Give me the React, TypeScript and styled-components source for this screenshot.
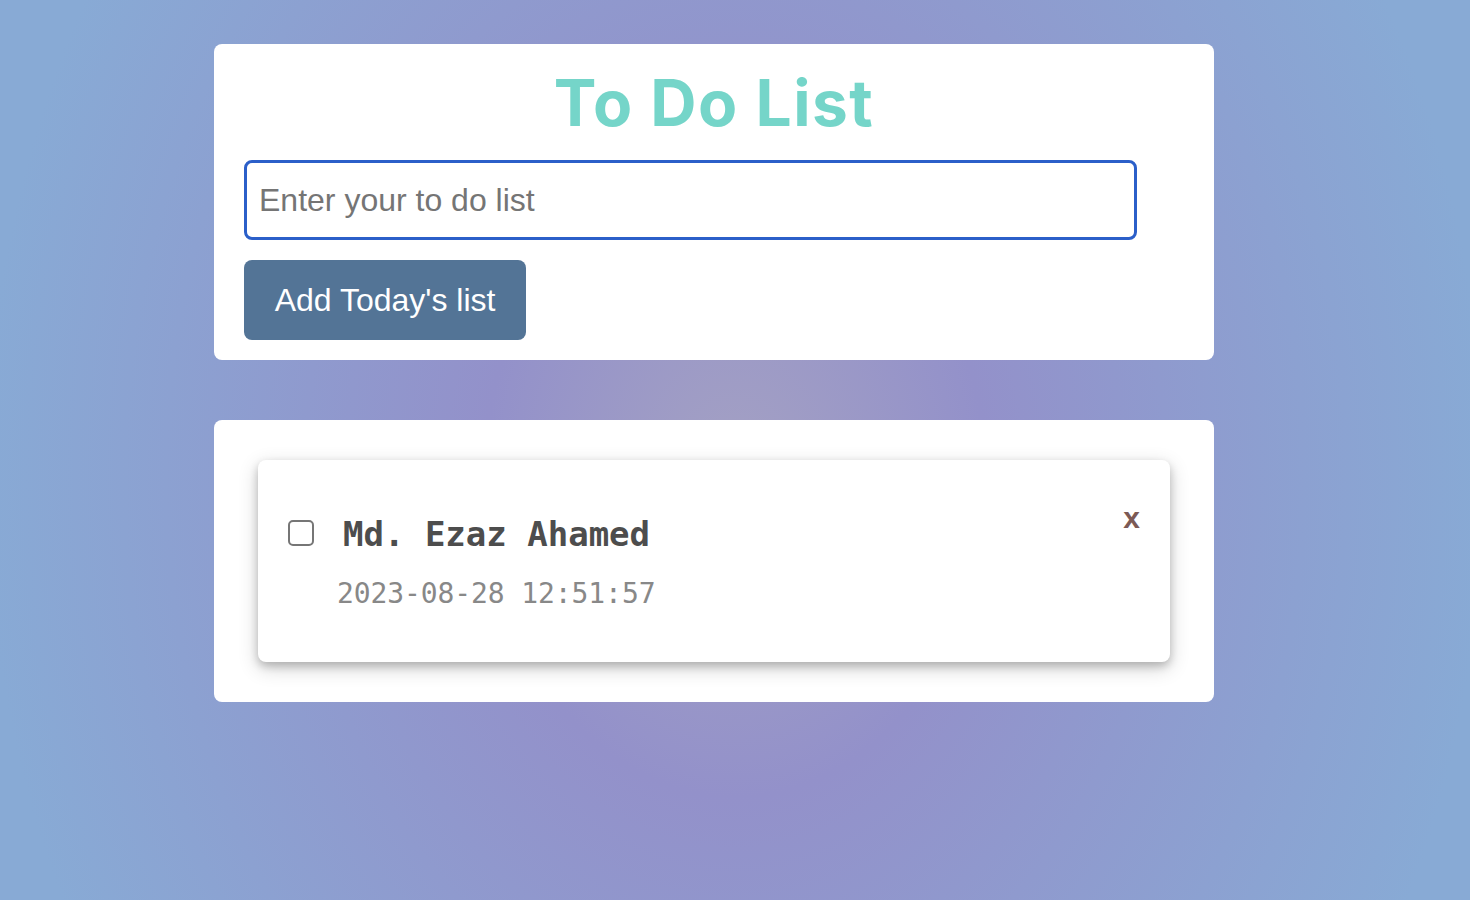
import React, { useState } from "react";
import styled, { createGlobalStyle } from "styled-components";

const GlobalStyle = createGlobalStyle`
  html, body { margin: 0; padding: 0; }
  body {
    min-height: 100vh;
    background: radial-gradient(ellipse 1000px 1280px at 50% 53%, #a4a1c3 0%, #9391ca 25%, #88aad5 75%);
    font-family: "Liberation Sans", Arial, sans-serif;
  }
  * { box-sizing: border-box; }
`;

const Page = styled.main`
  display: flex;
  flex-direction: column;
  gap: 60px;
  padding: 44px 0 0 214px;
`;

const Card = styled.section`
  width: 1000px;
  background: #ffffff;
  border-radius: 8px;
`;

const FormCard = styled(Card)`
  padding: 20px 30px 20px;
  display: flex;
  flex-direction: column;
`;

const Title = styled.h1`
  margin: 0 0 19px;
  text-align: center;
  font-family: Inter, "Open Sans", sans-serif;
  font-weight: 700;
  font-size: 64px;
  letter-spacing: 1.5px;
  color: #75d5c9;
  line-height: 77px;
`;

const TextInput = styled.input`
  width: 95%;
  height: 80px;
  border: 3px solid #2b5fc9;
  border-radius: 8px;
  padding: 0 12px;
  font-family: "Liberation Sans", Arial, sans-serif;
  font-size: 32px;
  color: #222;
  caret-color: #000;
  outline: none;
  &::placeholder { color: #757575; }
`;

const AddButton = styled.button`
  margin-top: 20px;
  align-self: flex-start;
  height: 80px;
  width: 282px;
  padding: 0;
  border: none;
  border-radius: 8px;
  background: #537496;
  color: #ffffff;
  font-family: "Liberation Sans", Arial, sans-serif;
  font-size: 32px;
  cursor: pointer;
`;

const ListCard = styled(Card)`
  padding: 40px 44px;
`;

const Item = styled.article`
  background: #ffffff;
  border-radius: 8px;
  padding: 41px 30px 52px;
  box-shadow: 0 4px 8px 0 rgba(0, 0, 0, 0.2), 0 6px 20px 0 rgba(0, 0, 0, 0.19);
  display: flex;
  flex-direction: column;
`;

const ItemHead = styled.div`
  display: flex;
  align-items: flex-start;
`;

const Check = styled.input`
  appearance: none;
  margin: 19px 29px 0 0;
  width: 26px;
  height: 26px;
  border: 2px solid #767676;
  border-radius: 5px;
  background: #fff;
  flex: none;
`;

const ItemTitle = styled.h3`
  margin: 13px 0 0;
  flex: 1;
  font-family: "DejaVu Sans Mono", "Liberation Mono", monospace;
  font-weight: 700;
  font-size: 34px;
  line-height: 40px;
  color: #4d4d4d;
  letter-spacing: 0;
`;

const Remove = styled.button`
  border: none;
  background: none;
  padding: 0;
  margin: 0;
  font-family: "Liberation Sans", Arial, sans-serif;
  font-weight: 700;
  font-size: 30px;
  line-height: 34px;
  color: #7c5a55;
  cursor: pointer;
`;

const ItemDate = styled.p`
  margin: 23px 0 0 49px;
  font-family: "DejaVu Sans Mono", "Liberation Mono", monospace;
  font-size: 28px;
  line-height: 33px;
  color: #888888;
  letter-spacing: -0.1px;
`;

export default function App() {
  const [value, setValue] = useState("");
  return (
    <>
      <GlobalStyle />
      <Page>
        <FormCard>
          <Title>To Do List</Title>
          <TextInput
            autoFocus
            value={value}
            onChange={(e) => setValue(e.target.value)}
            placeholder="Enter your to do list"
          />
          <AddButton>Add Today's list</AddButton>
        </FormCard>
        <ListCard>
          <Item>
            <ItemHead>
              <Check type="checkbox" />
              <ItemTitle>Md. Ezaz Ahamed</ItemTitle>
              <Remove>x</Remove>
            </ItemHead>
            <ItemDate>2023-08-28 12:51:57</ItemDate>
          </Item>
        </ListCard>
      </Page>
    </>
  );
}
